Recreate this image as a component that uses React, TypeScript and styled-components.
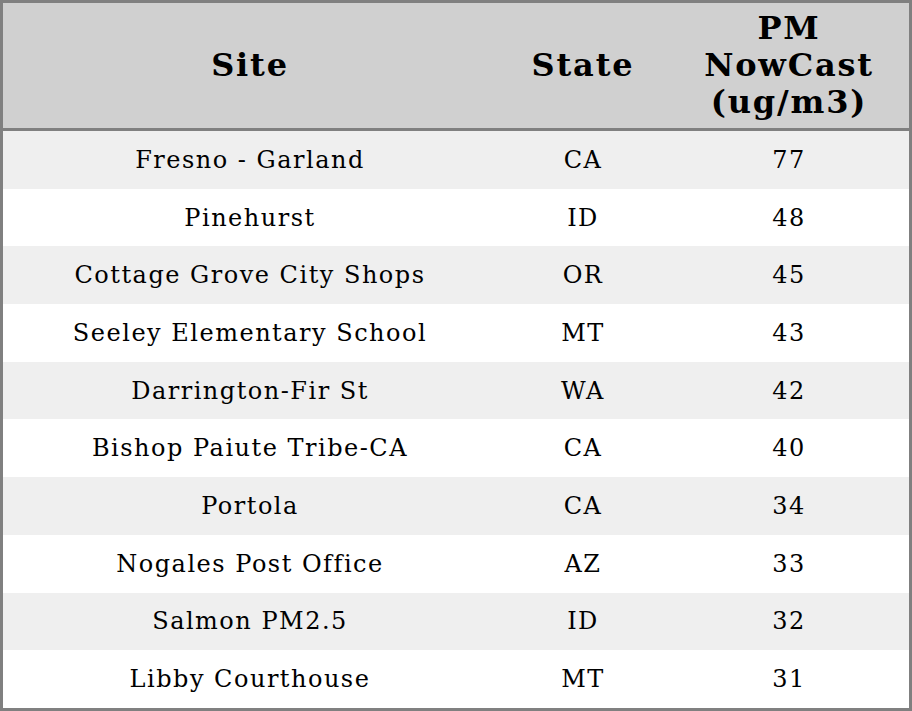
import React from 'react'
import styled, { createGlobalStyle } from 'styled-components'

const GlobalStyle = createGlobalStyle`
  html, body {
    margin: 0;
    padding: 0;
    background: #fff;
  }
`

const Table = styled.table`
  width: 912px;
  height: 711px;
  border: 3px solid #808080;
  border-collapse: separate;
  border-spacing: 0;
  box-sizing: border-box;
  table-layout: fixed;
  font-family: "DejaVu Serif", "Liberation Serif", serif;
  color: #000;
`

const HeadCell = styled.th<{ $w: number }>`
  width: ${(p) => p.$w}px;
  height: 125px;
  padding: 0;
  background: #d0d0d0;
  border-bottom: 3px solid #808080;
  font-size: 32px;
  font-weight: bold;
  line-height: 37px;
  letter-spacing: 1.8px;
  text-align: center;
  vertical-align: middle;
`

const Row = styled.tr<{ $odd: boolean }>`
  background: ${(p) => (p.$odd ? '#efefef' : '#ffffff')};
`

const Cell = styled.td`
  height: 57.7px;
  padding: 0;
  font-size: 24px;
  letter-spacing: 1.5px;
  text-align: center;
  vertical-align: middle;
`

const rows: [string, string, number][] = [
  ['Fresno - Garland', 'CA', 77],
  ['Pinehurst', 'ID', 48],
  ['Cottage Grove City Shops', 'OR', 45],
  ['Seeley Elementary School', 'MT', 43],
  ['Darrington-Fir St', 'WA', 42],
  ['Bishop Paiute Tribe-CA', 'CA', 40],
  ['Portola', 'CA', 34],
  ['Nogales Post Office', 'AZ', 33],
  ['Salmon PM2.5', 'ID', 32],
  ['Libby Courthouse', 'MT', 31],
]

const App: React.FC = () => {
  return (
    <>
      <GlobalStyle />
      <Table>
        <thead>
          <tr>
            <HeadCell $w={494}>Site</HeadCell>
            <HeadCell $w={172}>State</HeadCell>
            <HeadCell $w={240}>
              PM
              <br />
              NowCast
              <br />
              (ug/m3)
            </HeadCell>
          </tr>
        </thead>
        <tbody>
          {rows.map(([site, state, value], i) => (
            <Row key={site} $odd={i % 2 === 0}>
              <Cell>{site}</Cell>
              <Cell>{state}</Cell>
              <Cell>{value}</Cell>
            </Row>
          ))}
        </tbody>
      </Table>
    </>
  )
}

export default App
